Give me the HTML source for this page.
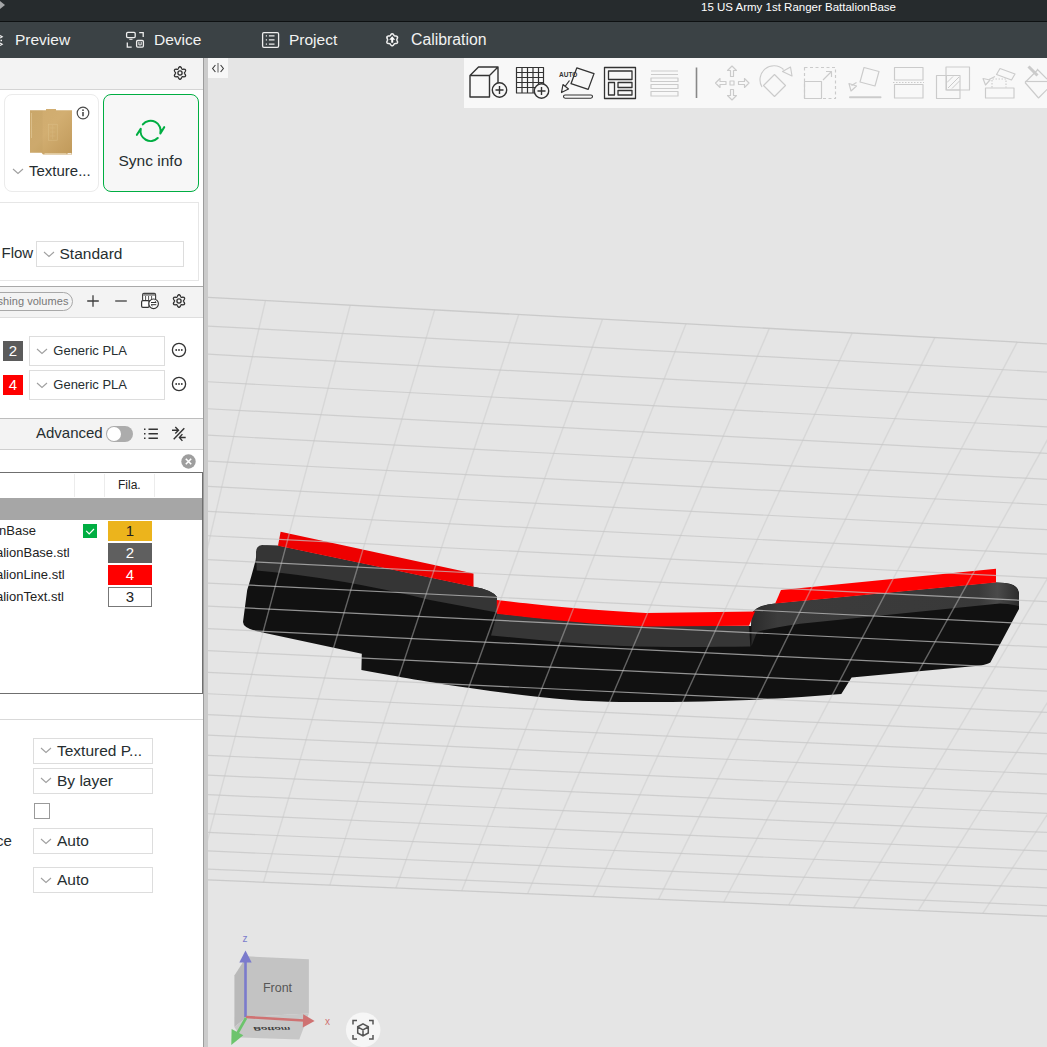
<!DOCTYPE html>
<html><head><meta charset="utf-8">
<style>
*{margin:0;padding:0;box-sizing:border-box}
html,body{width:1047px;height:1047px;overflow:hidden;background:#e5e5e5;font-family:"Liberation Sans",sans-serif;position:relative}
.a{position:absolute}
.t{position:absolute;white-space:nowrap;line-height:1}
.tab{color:#f2f2f2;font-size:15.5px}
.dd{position:absolute;border:1px solid #dddddd;background:#fff}
.chev{position:absolute;width:6px;height:6px;border-right:1px solid #9a9a9a;border-bottom:1px solid #9a9a9a;transform:rotate(45deg)}
.txt{color:#262e30}
.sw{position:absolute;color:#fff;font-size:15px;text-align:center;line-height:20px}
</style></head>
<body>
<!-- TITLE BAR -->
<div class="a" style="left:0;top:0;width:1047px;height:21px;background:#262b2d"></div>
<div class="a" style="left:0;top:1px;width:0;height:0;border-top:4.5px solid transparent;border-bottom:4.5px solid transparent;border-left:5px solid #a4a6a7"></div>
<div class="t" style="left:701px;top:2px;font-size:11.5px;color:#fff">15 US Army 1st Ranger BattalionBase</div>

<!-- TAB BAR -->
<div class="a" style="left:0;top:21px;width:1047px;height:1px;background:#0e1112"></div>
<div class="a" style="left:0;top:22px;width:1047px;height:36px;background:#3b4245"></div>
<div class="t tab" style="left:15px;top:32px">Preview</div>
<svg class="a" style="left:0;top:33px" width="6" height="14" viewBox="0 0 6 14" fill="none" stroke="#f0f0f0" stroke-width="1.2"><path d="M0 2.5l2.2 1.3L0 5.1M0 10l2.2 1.3L0 12.6"/><path d="M0.5 7.5h1.5" stroke-width="1.5"/></svg>
<div class="t tab" style="left:154px;top:32px">Device</div>
<div class="t tab" style="left:289px;top:32px">Project</div>
<div class="t tab" style="left:411px;top:32px;font-size:15.8px">Calibration</div>
<!-- device icon -->
<svg class="a" style="left:120px;top:27px" width="30" height="26" viewBox="120 27 30 26" fill="none" stroke="#eeeeee" stroke-width="1.3">
  <rect x="126.6" y="32.4" width="8.6" height="5.2" rx="1.1"/>
  <path d="M129.3 39.3h3.2" stroke-width="1.1"/>
  <path d="M139.2 32.6h4v4.4M127.3 42.6v4.5h4.4"/>
  <rect x="136.6" y="40.5" width="6.8" height="6.7" rx="1.1"/>
  <path d="M138.9 42v2.9h2.3V42" stroke-width="1"/>
</svg>
<!-- project icon -->
<svg class="a" style="left:256px;top:27px" width="30" height="26" viewBox="256 27 30 26" fill="none" stroke="#eeeeee" stroke-width="1.3">
  <rect x="262.6" y="32.6" width="16" height="14.8" rx="1.3"/>
  <path d="M265.8 35.9h1.2M265.8 39.9h1.2M265.8 44.1h1.2M268.9 35.9h5.6M268.9 39.9h5.6M268.9 44.1h5.6" stroke-width="1.4"/>
</svg>
<!-- calibration icon -->
<svg class="a" style="left:378px;top:27px" width="30" height="26" viewBox="378 27 30 26">
  <path d="M396.80 39.80 L396.83 39.56 L396.91 39.31 L397.03 39.04 L397.17 38.74 L397.32 38.43 L397.45 38.10 L397.53 37.75 L397.56 37.41 L397.52 37.09 L397.40 36.80 L397.20 36.55 L396.95 36.35 L396.64 36.21 L396.30 36.11 L395.95 36.05 L395.60 36.02 L395.28 36.00 L394.98 35.97 L394.72 35.91 L394.50 35.82 L394.30 35.67 L394.13 35.48 L393.95 35.24 L393.77 34.97 L393.57 34.68 L393.35 34.40 L393.09 34.16 L392.81 33.97 L392.51 33.84 L392.20 33.80 L391.89 33.84 L391.59 33.97 L391.31 34.16 L391.05 34.40 L390.83 34.68 L390.63 34.97 L390.45 35.24 L390.27 35.48 L390.10 35.67 L389.90 35.82 L389.68 35.91 L389.42 35.97 L389.12 36.00 L388.80 36.02 L388.45 36.05 L388.10 36.11 L387.76 36.21 L387.45 36.35 L387.20 36.55 L387.00 36.80 L386.88 37.09 L386.84 37.41 L386.87 37.75 L386.95 38.10 L387.08 38.43 L387.23 38.74 L387.37 39.04 L387.49 39.31 L387.57 39.56 L387.60 39.80 L387.57 40.04 L387.49 40.29 L387.37 40.56 L387.23 40.86 L387.08 41.17 L386.95 41.50 L386.87 41.85 L386.84 42.19 L386.88 42.51 L387.00 42.80 L387.20 43.05 L387.45 43.25 L387.76 43.39 L388.10 43.49 L388.45 43.55 L388.80 43.58 L389.12 43.60 L389.42 43.63 L389.68 43.69 L389.90 43.78 L390.10 43.93 L390.27 44.12 L390.45 44.36 L390.63 44.63 L390.83 44.92 L391.05 45.20 L391.31 45.44 L391.59 45.63 L391.89 45.76 L392.20 45.80 L392.51 45.76 L392.81 45.63 L393.09 45.44 L393.35 45.20 L393.57 44.92 L393.77 44.63 L393.95 44.36 L394.13 44.12 L394.30 43.93 L394.50 43.78 L394.72 43.69 L394.98 43.63 L395.28 43.60 L395.60 43.58 L395.95 43.55 L396.30 43.49 L396.64 43.39 L396.95 43.25 L397.20 43.05 L397.40 42.80 L397.52 42.51 L397.56 42.19 L397.53 41.85 L397.45 41.50 L397.32 41.17 L397.17 40.86 L397.03 40.56 L396.91 40.29 L396.83 40.04Z" fill="none" stroke="#eeeeee" stroke-width="1.5" stroke-linejoin="round"/>
  <path d="M392.2 36.2l-3 3.6h2v2.9h2v-2.9h2z" fill="#ffffff"/>
</svg>

<!-- LEFT PANEL -->
<div class="a" style="left:0;top:58px;width:203px;height:989px;background:#fff"></div>
<div class="a" style="left:0;top:58px;width:203px;height:31px;background:#f3f3f3"></div>
<div class="a" style="left:0;top:89px;width:203px;height:1px;background:#d4d4d4"></div>
<!-- gear header -->
<svg class="a" style="left:171px;top:64px" width="18" height="18" viewBox="0 0 18 18" fill="none" stroke="#2e2e2e" stroke-width="1.3" stroke-linejoin="round">
  <path d="M13.40 9.00 L13.44 8.77 L13.56 8.52 L13.73 8.25 L13.95 7.95 L14.17 7.62 L14.37 7.26 L14.52 6.88 L14.59 6.51 L14.57 6.16 L14.46 5.85 L14.24 5.59 L13.95 5.40 L13.59 5.28 L13.19 5.22 L12.78 5.22 L12.38 5.24 L12.02 5.28 L11.69 5.29 L11.42 5.27 L11.20 5.19 L11.02 5.04 L10.86 4.81 L10.72 4.53 L10.56 4.19 L10.38 3.83 L10.17 3.48 L9.92 3.16 L9.64 2.91 L9.33 2.76 L9.00 2.70 L8.67 2.76 L8.36 2.91 L8.08 3.16 L7.83 3.48 L7.62 3.83 L7.44 4.19 L7.28 4.53 L7.14 4.81 L6.98 5.04 L6.80 5.19 L6.58 5.27 L6.31 5.29 L5.98 5.28 L5.62 5.24 L5.22 5.22 L4.81 5.22 L4.41 5.28 L4.05 5.40 L3.76 5.59 L3.54 5.85 L3.43 6.16 L3.41 6.51 L3.48 6.88 L3.63 7.26 L3.83 7.62 L4.05 7.95 L4.27 8.25 L4.44 8.52 L4.56 8.77 L4.60 9.00 L4.56 9.23 L4.44 9.48 L4.27 9.75 L4.05 10.05 L3.83 10.38 L3.63 10.74 L3.48 11.12 L3.41 11.49 L3.43 11.84 L3.54 12.15 L3.76 12.41 L4.05 12.60 L4.41 12.72 L4.81 12.78 L5.22 12.78 L5.62 12.76 L5.98 12.72 L6.31 12.71 L6.58 12.73 L6.80 12.81 L6.98 12.96 L7.14 13.19 L7.28 13.47 L7.44 13.81 L7.62 14.17 L7.83 14.52 L8.08 14.84 L8.36 15.09 L8.67 15.24 L9.00 15.30 L9.33 15.24 L9.64 15.09 L9.92 14.84 L10.17 14.52 L10.38 14.17 L10.56 13.81 L10.72 13.47 L10.86 13.19 L11.02 12.96 L11.20 12.81 L11.42 12.73 L11.69 12.71 L12.02 12.72 L12.38 12.76 L12.78 12.78 L13.19 12.78 L13.59 12.72 L13.95 12.60 L14.24 12.41 L14.46 12.15 L14.57 11.84 L14.59 11.49 L14.52 11.12 L14.37 10.74 L14.17 10.38 L13.95 10.05 L13.73 9.75 L13.56 9.48 L13.44 9.23Z"/>
  <circle cx="9" cy="9" r="2.1"/>
</svg>

<!-- texture card -->
<div class="a" style="left:4px;top:94px;width:95px;height:98px;border:1px solid #ebebeb;border-radius:8px;background:#fff"></div>
<svg class="a" style="left:28px;top:107px" width="48" height="50" viewBox="28 107 48 50">
  <defs><linearGradient id="pl" x1="0" y1="0" x2="1" y2="1"><stop offset="0" stop-color="#cfab6e"/><stop offset=".45" stop-color="#d2ae71"/><stop offset="1" stop-color="#c0995a"/></linearGradient></defs>
  <path d="M30 110.3h16v-1.3h10v1.3h16v44.2h-29l-1.5-1.7H30z" fill="url(#pl)"/>
  <rect x="30" y="110.3" width="12.5" height="42.5" fill="#b08850" opacity=".12"/>
  <rect x="48.5" y="124.2" width="8.7" height="16" fill="none" stroke="#e3c993" stroke-width=".6" opacity=".6"/>
  <path d="M50 128h5.5M50 132h5.5M50 136h5.5M52.7 125v14" stroke="#dcc08a" stroke-width=".5" opacity=".6"/>
  <path d="M31.5 113v25" stroke="#e8d3a6" stroke-width=".5"/>
  <path d="M44.5 153.7h22" stroke="#efe0bf" stroke-width=".8"/><path d="M67.5 153.7h4" stroke="#fff" stroke-width="1"/>
</svg>
<svg class="a" style="left:76px;top:106px" width="14" height="14" viewBox="0 0 14 14" fill="none" stroke="#4a4a4a">
  <circle cx="7" cy="7" r="5.8" stroke-width="1.2"/>
  <path d="M7 6v4.2" stroke-width="1.6"/><circle cx="7" cy="4.2" r=".9" fill="#4a4a4a" stroke="none"/>
</svg>
<svg class="a" style="left:11.6px;top:168.0px" width="12" height="7"><path d="M1 1L6 5.5 11 1" fill="none" stroke="#a0a0a0" stroke-width="1.1"/></svg>
<div class="t txt" style="left:29px;top:163.3px;font-size:15px">Texture...</div>

<!-- sync card -->
<div class="a" style="left:103px;top:94px;width:96px;height:98px;border:1px solid #00ae42;border-radius:8px;background:#f7f7f7"></div>
<svg class="a" style="left:134px;top:116px" width="33" height="30" viewBox="0 0 33 30" fill="none" stroke="#00ae42" stroke-width="2.1" stroke-linecap="round" stroke-linejoin="round">
  <path d="M8.86 8.41A10.1 10.1 0 0 1 26.36 17.51L30.2 11.2"/>
  <path d="M23.74 22.04A10.1 10.1 0 0 1 6.72 12.8L2.9 18.8"/>
</svg>
<div class="t txt" style="left:118.5px;top:152.7px;font-size:15.5px">Sync info</div>

<!-- process box -->
<div class="a" style="left:-2px;top:202px;width:201px;height:79px;border:1px solid #e6e6e6;background:#fff"></div>
<div class="t txt" style="left:1.5px;top:245px;font-size:15px">Flow</div>
<div class="dd" style="left:36px;top:241px;width:148px;height:26px"></div>
<svg class="a" style="left:42.5px;top:250.5px" width="12" height="7"><path d="M1 1L6 5.5 11 1" fill="none" stroke="#a0a0a0" stroke-width="1.1"/></svg>
<div class="t txt" style="left:59.5px;top:245.5px;font-size:15.5px">Standard</div>

<!-- filament toolbar -->
<div class="a" style="left:0;top:286px;width:203px;height:32px;background:#f3f3f3;border-top:1px solid #a9a9a9;border-bottom:1px solid #dedede"></div>
<div class="a" style="left:-40px;top:292px;width:113px;height:19px;border:1px solid #a8a8a8;border-radius:9.5px;background:#f3f3f3"></div>
<div class="t" style="left:-2.5px;top:295.6px;font-size:11px;color:#777;letter-spacing:.05px">shing volumes</div>
<svg class="a" style="left:85px;top:293px" width="16" height="16" viewBox="0 0 16 16" stroke="#3e3e3e" stroke-width="1.5"><path d="M8 2.2v11.6M2.2 8h11.6" stroke-width="1.3"/></svg>
<svg class="a" style="left:113px;top:293px" width="16" height="16" viewBox="0 0 16 16" stroke="#3e3e3e" stroke-width="1.5"><path d="M2.2 8h11.6" stroke-width="1.3"/></svg>
<svg class="a" style="left:138px;top:288px" width="24" height="24" viewBox="138 288 24 24">
  <rect x="142.6" y="293.4" width="13" height="7.4" rx="1.3" fill="#fff" stroke="#3a3a3a" stroke-width="1.1"/>
  <rect x="143.1" y="293.9" width="12" height="1.9" fill="#8a8a8a"/>
  <path d="M145.6 296v4.4M148.6 296v4.4M151.6 296v4.4" stroke="#555" stroke-width="1"/>
  <rect x="141.6" y="300.6" width="7.6" height="6.7" rx="1.3" fill="#fff" stroke="#333" stroke-width="1.2"/>
  <circle cx="153.6" cy="303.8" r="4.8" fill="#fff" stroke="#333" stroke-width="1.15"/>
  <path d="M151 302.5h5.2l-1.4-1.3M156.3 304.7h-5.2l1.4 1.3" fill="none" stroke="#333" stroke-width="1"/>
</svg>
<svg class="a" style="left:170px;top:292px" width="18" height="18" viewBox="0 0 18 18" fill="none" stroke="#2e2e2e" stroke-width="1.3" stroke-linejoin="round">
  <path d="M13.40 9.00 L13.44 8.77 L13.56 8.52 L13.73 8.25 L13.95 7.95 L14.17 7.62 L14.37 7.26 L14.52 6.88 L14.59 6.51 L14.57 6.16 L14.46 5.85 L14.24 5.59 L13.95 5.40 L13.59 5.28 L13.19 5.22 L12.78 5.22 L12.38 5.24 L12.02 5.28 L11.69 5.29 L11.42 5.27 L11.20 5.19 L11.02 5.04 L10.86 4.81 L10.72 4.53 L10.56 4.19 L10.38 3.83 L10.17 3.48 L9.92 3.16 L9.64 2.91 L9.33 2.76 L9.00 2.70 L8.67 2.76 L8.36 2.91 L8.08 3.16 L7.83 3.48 L7.62 3.83 L7.44 4.19 L7.28 4.53 L7.14 4.81 L6.98 5.04 L6.80 5.19 L6.58 5.27 L6.31 5.29 L5.98 5.28 L5.62 5.24 L5.22 5.22 L4.81 5.22 L4.41 5.28 L4.05 5.40 L3.76 5.59 L3.54 5.85 L3.43 6.16 L3.41 6.51 L3.48 6.88 L3.63 7.26 L3.83 7.62 L4.05 7.95 L4.27 8.25 L4.44 8.52 L4.56 8.77 L4.60 9.00 L4.56 9.23 L4.44 9.48 L4.27 9.75 L4.05 10.05 L3.83 10.38 L3.63 10.74 L3.48 11.12 L3.41 11.49 L3.43 11.84 L3.54 12.15 L3.76 12.41 L4.05 12.60 L4.41 12.72 L4.81 12.78 L5.22 12.78 L5.62 12.76 L5.98 12.72 L6.31 12.71 L6.58 12.73 L6.80 12.81 L6.98 12.96 L7.14 13.19 L7.28 13.47 L7.44 13.81 L7.62 14.17 L7.83 14.52 L8.08 14.84 L8.36 15.09 L8.67 15.24 L9.00 15.30 L9.33 15.24 L9.64 15.09 L9.92 14.84 L10.17 14.52 L10.38 14.17 L10.56 13.81 L10.72 13.47 L10.86 13.19 L11.02 12.96 L11.20 12.81 L11.42 12.73 L11.69 12.71 L12.02 12.72 L12.38 12.76 L12.78 12.78 L13.19 12.78 L13.59 12.72 L13.95 12.60 L14.24 12.41 L14.46 12.15 L14.57 11.84 L14.59 11.49 L14.52 11.12 L14.37 10.74 L14.17 10.38 L13.95 10.05 L13.73 9.75 L13.56 9.48 L13.44 9.23Z"/>
  <circle cx="9" cy="9" r="2.1"/>
</svg>

<!-- filament rows -->
<div class="sw" style="left:3px;top:341px;width:20px;height:20px;background:#5b5b5b">2</div>
<div class="dd" style="left:29px;top:336px;width:136px;height:30px"></div>
<svg class="a" style="left:35.8px;top:347.6px" width="12" height="7"><path d="M1 1L6 5.5 11 1" fill="none" stroke="#a0a0a0" stroke-width="1.1"/></svg>
<div class="t txt" style="left:53.3px;top:343.6px;font-size:13px">Generic PLA</div>
<svg class="a" style="left:171px;top:342px" width="16" height="16" viewBox="0 0 16 16"><circle cx="8" cy="8" r="6.6" fill="none" stroke="#333" stroke-width="1.3"/><circle cx="5.2" cy="8" r=".9" fill="#333"/><circle cx="8" cy="8" r=".9" fill="#333"/><circle cx="10.8" cy="8" r=".9" fill="#333"/></svg>
<div class="sw" style="left:3px;top:375px;width:20px;height:20px;background:#ff0000">4</div>
<div class="dd" style="left:29px;top:370px;width:136px;height:30px"></div>
<svg class="a" style="left:35.8px;top:381.6px" width="12" height="7"><path d="M1 1L6 5.5 11 1" fill="none" stroke="#a0a0a0" stroke-width="1.1"/></svg>
<div class="t txt" style="left:53.3px;top:377.6px;font-size:13px">Generic PLA</div>
<svg class="a" style="left:171px;top:376px" width="16" height="16" viewBox="0 0 16 16"><circle cx="8" cy="8" r="6.6" fill="none" stroke="#333" stroke-width="1.3"/><circle cx="5.2" cy="8" r=".9" fill="#333"/><circle cx="8" cy="8" r=".9" fill="#333"/><circle cx="10.8" cy="8" r=".9" fill="#333"/></svg>

<!-- advanced bar -->
<div class="a" style="left:0;top:418px;width:203px;height:32px;background:#f3f3f3;border-top:1px solid #bdbdbd;border-bottom:1px solid #cfcfcf"></div>
<div class="t txt" style="left:36px;top:425.3px;font-size:15px">Advanced</div>
<div class="a" style="left:106.3px;top:426px;width:26.7px;height:16px;border-radius:8px;background:#acacac"></div>
<div class="a" style="left:107.1px;top:427px;width:13.9px;height:14px;border-radius:50%;background:#fff"></div>
<svg class="a" style="left:142px;top:426px" width="17" height="16" viewBox="0 0 17 16" stroke="#333" stroke-width="1.5">
  <path d="M2 3.2h1.5M2 7.75h1.5M2 12.3h1.5M6.5 3.2h9.4M6.5 7.75h9.4M6.5 12.3h9.4"/>
</svg>
<svg class="a" style="left:170px;top:425px" width="18" height="18" viewBox="0 0 18 18" fill="none" stroke="#333" stroke-width="1.4">
  <path d="M3.7 14.2L14.3 3.3"/>
  <path d="M2 5.3h6.3M5.3 2l3.2 3.3-3.2 3.2"/>
  <path d="M15.7 12.5H9.6M12.4 9.1l-3 3.4 3 3.4"/>
</svg>
<!-- search row -->
<svg class="a" style="left:181px;top:454px" width="15" height="15" viewBox="0 0 15 15"><circle cx="7.5" cy="7.5" r="7.2" fill="#9e9e9e"/><path d="M4.8 4.8l5.4 5.4M10.2 4.8l-5.4 5.4" stroke="#fff" stroke-width="1.6"/></svg>

<!-- object table -->
<div class="a" style="left:-2px;top:472px;width:205px;height:222px;border:1px solid #6f6f6f;border-left:none;background:#fff"></div>
<div class="a" style="left:74px;top:474px;width:1px;height:23px;background:#ececec"></div>
<div class="a" style="left:104px;top:474px;width:1px;height:23px;background:#ececec"></div>
<div class="a" style="left:154px;top:474px;width:1px;height:23px;background:#ececec"></div>
<div class="t txt" style="left:118px;top:479.4px;font-size:12px;color:#222">Fila.</div>
<div class="a" style="left:0;top:498px;width:202px;height:22px;background:#a6a6a6"></div>
<div class="t" style="left:-1px;top:524px;font-size:13px;color:#222">nBase</div>
<div class="a" style="left:83px;top:524px;width:14px;height:14px;background:#00ae42"></div>
<svg class="a" style="left:83px;top:524px" width="14" height="14" viewBox="0 0 14 14"><path d="M3.2 6.8l3 3 4.8-4.8" fill="none" stroke="#fff" stroke-width="1.2"/></svg>
<div class="t" style="left:-4px;top:546px;font-size:13px;color:#222">alionBase.stl</div>
<div class="t" style="left:-4px;top:567.7px;font-size:13px;color:#222">alionLine.stl</div>
<div class="t" style="left:-4px;top:589.5px;font-size:13px;color:#222">alionText.stl</div>
<div class="sw" style="left:108px;top:521px;width:44px;height:20px;background:#ecb41c;color:#222;line-height:20px">1</div>
<div class="sw" style="left:108px;top:543px;width:44px;height:20px;background:#5f5f5f">2</div>
<div class="sw" style="left:108px;top:565px;width:44px;height:20px;background:#ff0000">4</div>
<div class="sw" style="left:108px;top:587px;width:44px;height:20px;background:#fff;color:#222;border:1px solid #777;line-height:18px">3</div>

<!-- lower settings -->
<div class="a" style="left:0;top:719px;width:203px;height:1px;background:#d9d9d9"></div>
<div class="dd" style="left:33px;top:738px;width:120px;height:26px"></div>
<svg class="a" style="left:40.0px;top:747.4px" width="12" height="7"><path d="M1 1L6 5.5 11 1" fill="none" stroke="#a0a0a0" stroke-width="1.1"/></svg>
<div class="t txt" style="left:57px;top:742.9px;font-size:15.5px">Textured P...</div>
<div class="dd" style="left:33px;top:768px;width:120px;height:26px"></div>
<svg class="a" style="left:40.0px;top:777.4px" width="12" height="7"><path d="M1 1L6 5.5 11 1" fill="none" stroke="#a0a0a0" stroke-width="1.1"/></svg>
<div class="t txt" style="left:57px;top:773px;font-size:15.5px">By layer</div>
<div class="a" style="left:34px;top:803px;width:16px;height:16px;border:1px solid #9a9a9a;background:#fff"></div>
<div class="t txt" style="left:-4px;top:833.1px;font-size:15px">ce</div>
<div class="dd" style="left:33px;top:828px;width:120px;height:26px"></div>
<svg class="a" style="left:40.0px;top:837.6px" width="12" height="7"><path d="M1 1L6 5.5 11 1" fill="none" stroke="#a0a0a0" stroke-width="1.1"/></svg>
<div class="t txt" style="left:57px;top:832.7px;font-size:15.5px">Auto</div>
<div class="dd" style="left:33px;top:867px;width:120px;height:26px"></div>
<svg class="a" style="left:40.0px;top:876.8px" width="12" height="7"><path d="M1 1L6 5.5 11 1" fill="none" stroke="#a0a0a0" stroke-width="1.1"/></svg>
<div class="t txt" style="left:57px;top:871.6px;font-size:15.5px">Auto</div>

<!-- SEPARATOR -->
<div class="a" style="left:203px;top:58px;width:1px;height:989px;background:#9c9c9c"></div>
<div class="a" style="left:204px;top:58px;width:4px;height:989px;background:#cbcbcb"></div>

<!-- VIEWPORT -->
<svg class="a" style="left:208px;top:58px" width="839" height="989" viewBox="208 58 839 989">
<style>.gh{stroke:#c6c6c6;stroke-width:1.2;opacity:.72}.gv{stroke:#c8c8c8;stroke-width:1.4;opacity:.45}.gE{stroke:#c4c4c4;stroke-width:1.3;opacity:.8}</style>
<!--MODEL-->
<defs><linearGradient id="gl" gradientUnits="userSpaceOnUse" x1="256" y1="0" x2="497" y2="0"><stop offset="0" stop-color="#2a2a2a"/><stop offset=".08" stop-color="#383838"/><stop offset=".12" stop-color="#424242"/><stop offset=".2" stop-color="#323232"/><stop offset=".8" stop-color="#363636"/><stop offset="1" stop-color="#2e2e2e"/></linearGradient>
<linearGradient id="gr" gradientUnits="userSpaceOnUse" x1="751" y1="0" x2="1019" y2="0"><stop offset="0" stop-color="#2a2a2a"/><stop offset=".1" stop-color="#3c3c3c"/><stop offset=".85" stop-color="#393939"/><stop offset=".92" stop-color="#4a4a4a"/><stop offset="1" stop-color="#2c2c2c"/></linearGradient></defs>
<g id="model">
  <path fill="#111" d="M266.7,545.5 Q257,546 256.5,553 L255.7,560 Q251,578 247.2,590 L243,622 Q243,628 258,631.6 L361.8,653.7 L361.4,670 C390,675 420,681 470,688 C530,697 580,702 620,702 C700,702.5 770,700 841.3,694 L851.6,677.5 L981,665.6 Q988,664 990.3,662.6 L1019,609 L1019,593 Q1018,584 1005,583 L996,582.4 L775.2,603.5 Q757,605 752,613 L751,626 L749,626 C600,626.4 540,618 497,613.5 L497,597 Q492,590 473.5,586.8 L278,545.8 Z"/>
  <path fill="#353535" d="M262,545 L278,545.8 L473.5,586.8 Q492,590 497,597 L497,612.6 L430,600 Q340,578 256.7,570.6 L256,552 Q256,546 262,545 Z"/>
  <path fill="#363636" d="M497,613.5 C540,618 600,626.4 749,626 L750.4,646.5 C680,647.5 620,647.5 560,642 L491,635.5 Z"/>
  <path fill="url(#gr)" d="M775.2,603.5 L996,582.4 L1005,583 Q1019,585 1019,595 L1019,606 Q1002,602.5 994.8,604 L800,623.7 Q770,628 757,632 L751.5,646 L751.5,614 Q757,605 775.2,603.5 Z"/>
  <path fill="#ee0000" d="M280.6,531.8 L473.5,573.4 L473.5,586.8 L278,545.8 Z"/>
  <path fill="#ff0000" d="M496.8,600 C530,604 566,608.7 646,613 L755,611.5 L749,625.8 L646,626.4 C600,625 566,621.5 496.8,613.8 Z"/>
  <path fill="#ff0000" d="M781,590 L996,568.7 L996,582.4 L775.2,603.5 Z"/>
</g>
<!--GRID-->
<line class="gE" x1="9.7" y1="286.3" x2="1745.7" y2="382.5"/>
<line class="gh" x1="5.7" y1="315.0" x2="1724.0" y2="409.2"/>
<line class="gh" x1="1.8" y1="343.0" x2="1702.8" y2="435.3"/>
<line class="gh" x1="-2.0" y1="370.5" x2="1682.0" y2="460.9"/>
<line class="gh" x1="-5.7" y1="397.4" x2="1661.6" y2="486.0"/>
<line class="gh" x1="-9.3" y1="423.8" x2="1641.6" y2="510.6"/>
<line class="gh" x1="-12.9" y1="449.6" x2="1621.9" y2="534.7"/>
<line class="gh" x1="-16.4" y1="474.9" x2="1602.7" y2="558.3"/>
<line class="gh" x1="-19.8" y1="499.8" x2="1583.9" y2="581.5"/>
<line class="gh" x1="-23.2" y1="524.1" x2="1565.4" y2="604.3"/>
<line class="gh" x1="-26.5" y1="547.9" x2="1547.2" y2="626.6"/>
<line class="gh" x1="-29.7" y1="571.3" x2="1529.4" y2="648.5"/>
<line class="gh" x1="-32.9" y1="594.3" x2="1511.9" y2="670.0"/>
<line class="gh" x1="-36.0" y1="616.8" x2="1494.7" y2="691.1"/>
<line class="gh" x1="-39.0" y1="638.8" x2="1477.9" y2="711.8"/>
<line class="gh" x1="-42.0" y1="660.5" x2="1461.3" y2="732.2"/>
<line class="gh" x1="-45.0" y1="681.8" x2="1445.1" y2="752.1"/>
<line class="gh" x1="-47.9" y1="702.7" x2="1429.1" y2="771.8"/>
<line class="gh" x1="-50.7" y1="723.2" x2="1413.4" y2="791.1"/>
<line class="gh" x1="-53.5" y1="743.3" x2="1398.0" y2="810.0"/>
<line class="gh" x1="-56.2" y1="763.1" x2="1382.9" y2="828.6"/>
<line class="gh" x1="-58.9" y1="782.6" x2="1368.0" y2="846.9"/>
<line class="gh" x1="-61.5" y1="801.7" x2="1353.4" y2="864.9"/>
<line class="gh" x1="-64.1" y1="820.4" x2="1339.0" y2="882.6"/>
<line class="gh" x1="-66.7" y1="838.9" x2="1324.8" y2="900.0"/>
<line class="gh" x1="-69.2" y1="857.0" x2="1310.9" y2="917.1"/>
<line class="gE" x1="-70.7" y1="867.7" x2="1302.6" y2="927.3"/>
<line class="gv" x1="95.3" y1="291.0" x2="-3.5" y2="870.7"/>
<line class="gv" x1="180.6" y1="295.8" x2="63.6" y2="873.6"/>
<line class="gv" x1="265.5" y1="300.5" x2="130.4" y2="876.5"/>
<line class="gv" x1="350.2" y1="305.2" x2="197.1" y2="879.4"/>
<line class="gv" x1="434.6" y1="309.9" x2="263.5" y2="882.2"/>
<line class="gv" x1="518.7" y1="314.5" x2="329.8" y2="885.1"/>
<line class="gv" x1="602.5" y1="319.2" x2="395.9" y2="888.0"/>
<line class="gv" x1="686.0" y1="323.8" x2="461.8" y2="890.8"/>
<line class="gv" x1="769.3" y1="328.4" x2="527.6" y2="893.7"/>
<line class="gv" x1="852.2" y1="333.0" x2="593.1" y2="896.5"/>
<line class="gv" x1="934.8" y1="337.6" x2="658.5" y2="899.4"/>
<line class="gv" x1="1017.2" y1="342.1" x2="723.7" y2="902.2"/>
<line class="gv" x1="1099.2" y1="346.7" x2="788.7" y2="905.0"/>
<line class="gv" x1="1181.0" y1="351.2" x2="853.6" y2="907.8"/>
<line class="gv" x1="1262.5" y1="355.7" x2="918.3" y2="910.6"/>
<line class="gv" x1="1343.8" y1="360.2" x2="982.8" y2="913.4"/>
<line class="gv" x1="1424.7" y1="364.7" x2="1047.1" y2="916.2"/>
<line class="gv" x1="1505.4" y1="369.2" x2="1111.2" y2="919.0"/>
<line class="gv" x1="1585.8" y1="373.7" x2="1175.2" y2="921.8"/>
<!--/GRID-->
</svg>
<!-- view toggle -->
<div class="a" style="left:208px;top:58px;width:20px;height:20px;background:#f7f7f7"></div>
<svg class="a" style="left:210px;top:61px" width="16" height="14" viewBox="0 0 16 14" fill="none" stroke="#3c3c3c" stroke-width="1.1"><path d="M5.4 4L2.6 7.5 5.4 11M10.6 4l2.8 3.5-2.8 3.5"/><path d="M8 2v9.5" stroke="#8a8a8a" stroke-width="1.4"/></svg>
<!--TOOLBAR-->
<div class="a" style="left:464px;top:58px;width:583px;height:50px;background:#f8f8f8"></div>
<svg class="a" style="left:464px;top:58px" width="583" height="50" viewBox="464 58 583 50" fill="none" stroke-linejoin="round">
 <g stroke="#333" stroke-width="1.4">
  <!-- cube plus -->
  <path d="M470 75.5h19.5v21.5H470z M470 75.5l8.5-8.5h19.5l-8.5 8.5 M498 67v18"/>
  <circle cx="499.5" cy="90" r="7.2" fill="#f8f8f8"/>
  <path d="M495.5 90h8M499.5 86v8"/>
  <!-- grid plus -->
  <path d="M516.5 67.5h27v25.5h-27z M522 67.5v25.5M527.5 67.5v25.5M533 67.5v25.5M538.5 67.5v25.5 M516.5 72.5h27M516.5 77.5h27M516.5 82.5h27M516.5 87.5h27" stroke-width="1.2"/>
  <circle cx="541.5" cy="91" r="7.2" fill="#f8f8f8"/>
  <path d="M537.5 91h8M541.5 87v8"/>
  <!-- auto orient -->
  <path d="M576.8 67.9L594 73.6 588.2 89.4 571 83.7z" stroke-width="1.3"/>
  <path d="M569.5 80.5L565 86.5" stroke-width="1.2"/><path d="M561.5 92.5L563 84.5 568.5 89z" stroke-width="1.2"/>
  <rect x="563.5" y="95" width="29" height="3.2" rx="1.6" stroke-width="1.1"/>
  <!-- arrange -->
  <path d="M604.5 67.5h31v31h-31z M608.5 71h23.5v8.5h-23.5z M608.5 82.5h6v12.5h-6z M618 82.5h14v5h-14z M618 90.5h14v4.5h-14z" stroke-width="1.3"/>
  <!-- separator -->
  <path d="M696.5 67.5v30.5" stroke="#888" stroke-width="1.6"/>
 </g>
 <text x="559" y="77" font-family="Liberation Sans" font-size="6.5" font-weight="bold" fill="#333">AUTO</text>
 <g stroke="#cbcbcb" stroke-width="1.15">
  <!-- layers -->
  <path d="M651 71h27M651 74.5h27 M651 78h27v3.5h-27z M651 84.5h27v4h-27z M651 91.5h27v4.5h-27z" stroke-width="1.2"/>
  <!-- move -->
  <path d="M732 66l-4.5 4.5h3v6h3v-6h3z M732 100l-4.5-4.5h3v-6h3v6h3z M715.5 83l4.5-4.5v3h6v3h-6v3z M749 83l-4.5-4.5v3h-6v3h6v3z"/>
  <rect x="730" y="81" width="4" height="4"/>
  <!-- rotate -->
  <path d="M774.5 74.5l11 11-11 11-11-11z"/>
  <path d="M762 87a14 14 0 0 1 21.5-17.5"/><path d="M782.5 71.5l8-4.5 1.5 9z"/>
  <!-- scale -->
  <path d="M804.5 67.5h31v31h-31z" stroke-dasharray="3 2.5"/>
  <path d="M804.5 81.5h17v17h-17z"/>
  <path d="M823 80l8-8M826 71.5h5.5v5.5"/>
  <!-- lay on face -->
  <path d="M864 67.5l15 4-4 14.5-15-4z"/>
  <path d="M856.5 82.5l-5 3"/><path d="M849 83.5l2 7.5 5.5-5z"/>
  <path d="M850 97.2h30.5" stroke-width="2" stroke-linecap="round"/>
  <!-- cut -->
  <path d="M894.5 67.5h28.5v12.5h-28.5z M894.5 84.5h28.5v13.5h-28.5z"/>
  <path d="M893 82.5h31" stroke-dasharray="1.5 1.5"/>
  <!-- boolean -->
  <path d="M946 67h23.5v23h-23.5z M936.5 75.5h23.5v23h-23.5z"/>
  <path d="M946.5 75.5v14.5h13.5M948 88l11-11M952 88.5l7.5-7.5M947 82.5l6-6" stroke-width="1"/>
  <!-- emboss -->
  <path d="M985.5 98h28.5v-10h-28.5z"/><path d="M992 87.5v-8.5h14v8.5" stroke-dasharray="1.5 1.5"/>
  <path d="M996.5 74.5l3.5-6 15 5.5-3.5 6z"/>
  <path d="M995 76.5l-6 3"/><path d="M983 78.5l2.5 6.5 4.5-5z"/>
  <!-- paint -->
  <path d="M1037 69l10 10M1025 82.5l13.5 15.5 10-10M1025 82.5l13-13"/>
  <path d="M1025 81.5h22" />
  <path d="M1028.5 66.5l9 9" stroke-width="3"/>
 </g>
</svg>
<!--AXES-->
<svg class="a" style="left:208px;top:920px" width="200" height="127" viewBox="208 920 200 127">
  <path d="M234.4,975.4 L246.8,956.3 L246.8,1017 L234.4,1027 Z" fill="#b9b9b9"/>
  <path d="M246.8,956.3 L308.9,959.2 L308.9,1013.6 L246.8,1017 Z" fill="#c3c3c3"/>
  <path d="M234.4,1027 L246.8,1017 L308.9,1013.6 L299.3,1039.4 L241,1037.5 Z" fill="#c7c7c7"/>
  <text x="277.5" y="992" font-family="Liberation Sans" font-size="12.5" fill="#575757" text-anchor="middle">Front</text>
  <text x="0" y="3" font-family="Liberation Sans" font-size="8.5" font-weight="bold" fill="#3a3a3a" text-anchor="middle" transform="translate(272 1028.5) scale(1.25 -0.6) skewX(-12)">Bottom</text>
  <path d="M245.5 1017V961" stroke="#7b7bcc" stroke-width="2.6"/>
  <path d="M245.5 950.5L239.3 962.5h12.4z" fill="#7b7bcc"/>
  <text x="245" y="942" font-family="Liberation Sans" font-size="10" fill="#7b7bcc" text-anchor="middle">z</text>
  <path d="M246 1017L304 1020.5" stroke="#cf7272" stroke-width="2.6"/>
  <path d="M314.6 1021L303.2 1014.2 302.8 1027.6z" fill="#cf7272"/>
  <text x="327.5" y="1024.6" font-family="Liberation Sans" font-size="10" fill="#cf7272" text-anchor="middle">x</text>
  <path d="M246 1018L237 1034" stroke="#6cc46c" stroke-width="2.6"/>
  <path d="M231.3 1045L231.6 1029 243.3 1035.3z" fill="#6cc46c"/>
  <text x="229" y="1055" font-family="Liberation Sans" font-size="10" fill="#6cc46c" text-anchor="middle">y</text>
  <circle cx="363.2" cy="1029.8" r="17.3" fill="#f6f6f6"/>
  <g fill="none" stroke="#555" stroke-width="1.5">
    <path d="M353 1024.5v-4h4M369 1020.5h4v4M373 1035v4h-4M357 1039h-4v-4"/>
    <path d="M363 1023.8l5.3 3v6.2l-5.3 3-5.3-3v-6.2z M357.7 1026.8l5.3 3 5.3-3 M363 1029.8v6.2" stroke-width="1.5"/>
  </g>
</svg>
</body></html>
